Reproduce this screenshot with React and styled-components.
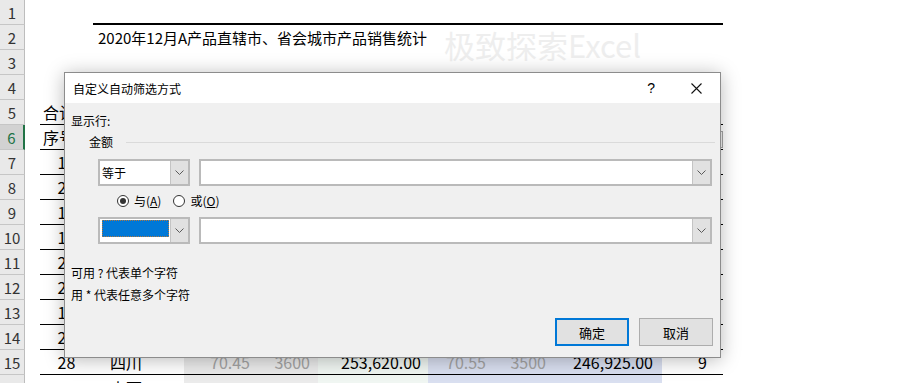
import React from "react";
import styled, { createGlobalStyle } from "styled-components";

const GlobalStyle = createGlobalStyle`
  html, body {
    margin: 0;
    padding: 0;
    background: #ffffff;
    overflow: hidden;
  }
  body {
    font-family: "Noto Sans CJK SC", "Noto Sans", sans-serif;
    color: #000;
  }
`;

const COLS = [15, 53, 91, 67, 67, 110, 67, 65, 102, 61];

const Sheet = styled.div`
  position: relative;
  width: 900px;
  height: 383px;
  overflow: hidden;
  background: #fff;
`;

const Row = styled.div`
  display: flex;
  height: 25px;
`;

const RowHead = styled.div`
  flex: 0 0 25px;
  box-sizing: border-box;
  height: 25px;
  display: flex;
  align-items: center;
  justify-content: center;
  font-size: 15px;
  color: ${(p) => (p.$active ? "#217346" : "#333")};
  background: ${(p) => (p.$active ? "#d2d2d2" : "#e9e9e9")};
  border-bottom: 1px solid #c6c6c6;
  border-right: ${(p) => (p.$active ? "2px solid #217346" : "1px solid #bdbdbd")};
`;

const Cell = styled.div`
  position: relative;
  flex: 0 0 ${(p) => p.$w}px;
  box-sizing: border-box;
  height: 25px;
  display: flex;
  align-items: center;
  justify-content: ${(p) =>
    p.$align === "right" ? "flex-end" : p.$align === "center" ? "center" : "flex-start"};
  padding-left: ${(p) => p.$pl || 0}px;
  padding-right: ${(p) => p.$pr || 0}px;
  font-size: ${(p) => p.$size || 16}px;
  white-space: nowrap;
  color: ${(p) => (p.$muted ? "#a3a3a3" : "#000")};
  background: ${(p) => p.$bg || "transparent"};
  border-bottom: ${(p) =>
    p.$line === "thick" ? "2px solid #000" : p.$line === "thin" ? "1px solid #000" : "none"};
`;

const FilterBtn = styled.span`
  position: absolute;
  right: 0;
  top: 6px;
  width: 17px;
  height: 17px;
  box-sizing: border-box;
  border: 1px solid #a6a6a6;
  background: #f3f3f3;
`;

const Watermark = styled.div`
  position: absolute;
  left: 444px;
  top: 26px;
  font-size: 31px;
  line-height: 1.2;
  color: #eeeeee;
  white-space: nowrap;
  pointer-events: none;
`;

/* dialog */
const Dialog = styled.div`
  position: absolute;
  left: 64px;
  top: 72px;
  width: 657px;
  height: 286px;
  box-sizing: border-box;
  border: 1px solid #8c8c8c;
  background: #f0f0f0;
  box-shadow: 0 2px 18px rgba(0, 0, 0, 0.28);
  display: flex;
  flex-direction: column;
  font-size: 12px;
`;

const TitleBar = styled.div`
  height: 30px;
  background: #fff;
  display: flex;
  align-items: center;
  justify-content: space-between;
  padding: 0 18px 0 8px;
`;

const Title = styled.span`
  font-size: 12px;
`;

const TitleTools = styled.div`
  display: flex;
  align-items: center;
  gap: 36px;
`;

const Help = styled.span`
  font-size: 14px;
  font-family: "Liberation Sans", sans-serif;
`;

const Body = styled.div`
  flex: 1;
  display: flex;
  flex-direction: column;
  padding: 10px 5px 0 6px;
`;

const Label = styled.div`
  line-height: 16px;
`;

const Group = styled.div`
  display: flex;
  align-items: center;
  margin: 5px 0 0 18px;
  line-height: 16px;
`;

const GroupLine = styled.span`
  flex: 1;
  height: 1px;
  margin-left: 13px;
  background: #dadada;
`;

const CriteriaRow = styled.div`
  display: flex;
  gap: 9px;
  margin: ${(p) => p.$mt}px 0 0 27px;
`;

const Combo = styled.div`
  display: flex;
  width: ${(p) => p.$w}px;
  height: 27px;
  box-sizing: border-box;
  border: 2px solid #bababa;
  background: #fff;
`;

const ComboText = styled.div`
  flex: 1;
  display: flex;
  align-items: center;
  padding-left: 2px;
`;

const Selected = styled.span`
  flex: 1;
  height: 17px;
  margin: 1px 1px 5px 0;
  box-sizing: border-box;
  background: #0078d7;
  outline: 1px dotted #b07840;
  outline-offset: -1px;
`;

const DropBtn = styled.div`
  flex: 0 0 17px;
  display: flex;
  align-items: center;
  justify-content: center;
  background: #e1e1e1;
  border-left: 1px solid #c4c4c4;
`;

const RadioRow = styled.div`
  display: flex;
  align-items: center;
  gap: 12px;
  margin: 7px 0 0 46px;
  line-height: 16px;
`;

const RadioItem = styled.label`
  display: flex;
  align-items: center;
  gap: 5px;
`;

const RadioDot = styled.span`
  width: 12px;
  height: 12px;
  box-sizing: border-box;
  border-radius: 50%;
  border: 1px solid #333;
  background: #fff;
  display: flex;
  align-items: center;
  justify-content: center;
  &::after {
    content: "";
    width: 6px;
    height: 6px;
    border-radius: 50%;
    background: ${(p) => (p.$checked ? "#333" : "transparent")};
  }
`;

const Hints = styled.div`
  display: flex;
  flex-direction: column;
  gap: 6px;
  margin-top: 21px;
  line-height: 16px;
`;

const Buttons = styled.div`
  display: flex;
  justify-content: flex-end;
  gap: 10px;
  margin: 15px 2px 0 0;
`;

const Button = styled.button`
  width: 74px;
  height: 28px;
  box-sizing: border-box;
  font-family: inherit;
  font-size: 13px;
  background: #e1e1e1;
  color: #000;
  border: ${(p) => (p.$primary ? "2px solid #0078d7" : "1px solid #adadad")};
  padding: 0;
`;

const Chevron = () => (
  <svg width="9" height="5" viewBox="0 0 9 5">
    <polyline points="0.5,0.5 4.5,4.5 8.5,0.5" fill="none" stroke="#5a5a5a" strokeWidth="1" />
  </svg>
);

const CloseIcon = () => (
  <svg width="11" height="11" viewBox="0 0 11 11">
    <path d="M0.5 0.5 L10.5 10.5 M10.5 0.5 L0.5 10.5" stroke="#111" strokeWidth="1.1" />
  </svg>
);

const GRAY = "#ebebeb";
const GREEN = "#f0f6f2";
const BLUE = "#d9dff0";

const tint = (i) => (i === 3 || i === 4 ? GRAY : i === 5 ? GREEN : i >= 6 && i <= 8 ? BLUE : null);

const firstNums = ["13", "25", "12", "18", "22", "24", "17", "26"];

const buildRows = () => {
  const rows = [];
  for (let n = 1; n <= 16; n++) {
    const cells = COLS.map(() => ({}));
    if (n === 1) for (let i = 2; i < 10; i++) cells[i].line = "thick";
    if (n === 2) cells[2] = { text: "2020年12月A产品直辖市、省会城市产品销售统计", pl: 5, size: 15 };
    if (n >= 5) for (let i = 1; i < 10; i++) cells[i].line = "thin";
    if (n === 5) Object.assign(cells[1], { text: "合计", pl: 3 });
    if (n === 6) {
      Object.assign(cells[1], { text: "序号", pl: 3 });
      cells[9].filter = true;
    }
    if (n >= 7) for (let i = 0; i < 10; i++) cells[i].bg = tint(i);
    if (n >= 7 && n <= 14) Object.assign(cells[1], { text: firstNums[n - 7], align: "center" });
    if (n === 15) {
      Object.assign(cells[1], { text: "28", align: "center" });
      Object.assign(cells[2], { text: "四川", pl: 17 });
      Object.assign(cells[3], { text: "70.45", align: "right", pr: 1, muted: true });
      Object.assign(cells[4], { text: "3600", align: "right", pr: 8, muted: true });
      Object.assign(cells[5], { text: "253,620.00", align: "right", pr: 7 });
      Object.assign(cells[6], { text: "70.55", align: "right", pr: 9, muted: true });
      Object.assign(cells[7], { text: "3500", align: "right", pr: 14, muted: true });
      Object.assign(cells[8], { text: "246,925.00", align: "right", pr: 9 });
      Object.assign(cells[9], { text: "9", align: "right", pr: 16 });
    }
    if (n === 16) {
      for (let i = 0; i < 10; i++) cells[i].line = null;
      Object.assign(cells[2], { text: "山西", pl: 17 });
    }
    rows.push({ n, cells });
  }
  return rows;
};

const rows = buildRows();

const App = () => {
  return (
    <>
      <GlobalStyle />
      <Sheet>
        {rows.map((r) => (
          <Row key={r.n}>
            <RowHead $active={r.n === 6}>{r.n}</RowHead>
            {COLS.map((w, i) => {
              const c = r.cells[i];
              return (
                <Cell
                  key={i}
                  $w={w}
                  $align={c.align}
                  $pl={c.pl}
                  $pr={c.pr}
                  $size={c.size}
                  $muted={c.muted}
                  $bg={c.bg}
                  $line={c.line}
                >
                  {c.text}
                  {c.filter && <FilterBtn />}
                </Cell>
              );
            })}
          </Row>
        ))}
        <Watermark>极致探索Excel</Watermark>

        <Dialog>
          <TitleBar>
            <Title>自定义自动筛选方式</Title>
            <TitleTools>
              <Help>?</Help>
              <CloseIcon />
            </TitleTools>
          </TitleBar>
          <Body>
            <Label>显示行:</Label>
            <Group>
              金额
              <GroupLine />
            </Group>
            <CriteriaRow $mt={9}>
              <Combo $w={92}>
                <ComboText>等于</ComboText>
                <DropBtn>
                  <Chevron />
                </DropBtn>
              </Combo>
              <Combo $w={513}>
                <ComboText />
                <DropBtn>
                  <Chevron />
                </DropBtn>
              </Combo>
            </CriteriaRow>
            <RadioRow>
              <RadioItem>
                <RadioDot $checked />
                <span>
                  与(<u>A</u>)
                </span>
              </RadioItem>
              <RadioItem>
                <RadioDot />
                <span>
                  或(<u>O</u>)
                </span>
              </RadioItem>
            </RadioRow>
            <CriteriaRow $mt={8}>
              <Combo $w={92}>
                <ComboText>
                  <Selected />
                </ComboText>
                <DropBtn>
                  <Chevron />
                </DropBtn>
              </Combo>
              <Combo $w={513}>
                <ComboText />
                <DropBtn>
                  <Chevron />
                </DropBtn>
              </Combo>
            </CriteriaRow>
            <Hints>
              <span>可用 ? 代表单个字符</span>
              <span>用 * 代表任意多个字符</span>
            </Hints>
            <Buttons>
              <Button $primary>确定</Button>
              <Button>取消</Button>
            </Buttons>
          </Body>
        </Dialog>
      </Sheet>
    </>
  );
};

export default App;
